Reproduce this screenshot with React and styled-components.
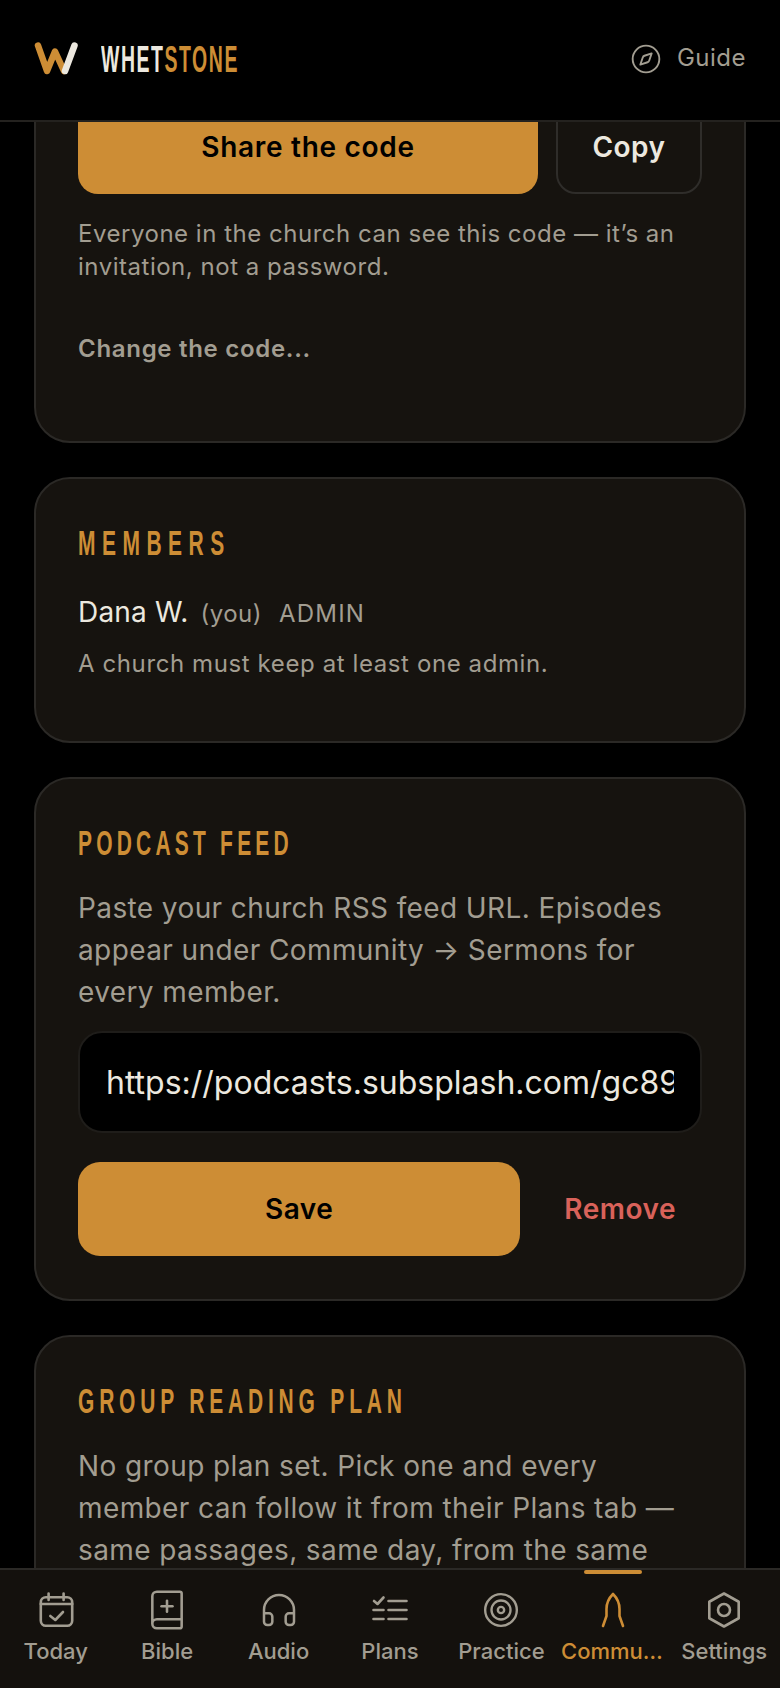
import styled, { createGlobalStyle } from "styled-components";
import { BookPlus, Compass, Headphones, Target } from "lucide-react";

const GlobalStyle = createGlobalStyle`
  html, body {
    margin: 0;
    background: #000;
  }
  * {
    box-sizing: border-box;
  }
`;

const accent = "#cd8d35";
const muted = "#a29d91";

const Logo = () => (
  <svg width="44" height="33" viewBox="0 0 44 33" fill="none" strokeWidth="6.5" strokeLinecap="round" strokeLinejoin="round">
    <path d="M4 3.5 L13 29 L21 9.5 L30 29" stroke={accent} />
    <path d="M40.5 3.5 L31 29" stroke="#ece8df" />
  </svg>
);

// the tab icons that the icon package has no close match for, all on a 44 box
const TabSvg = ({ children }) => (
  <svg width="44" height="44" viewBox="0 0 44 44" fill="none" stroke="currentColor" strokeWidth="2.6" strokeLinecap="round" strokeLinejoin="round">
    {children}
  </svg>
);

const CalendarIcon = () => (
  <TabSvg>
    <rect x="6.8" y="9.3" width="31.4" height="28.4" rx="5" />
    <path d="M6.8 16h31.4" />
    <path d="M14.6 5.5v6.5M29.6 5.5v6.5" />
    <path d="M16.3 28l5 4 7.7-8" />
  </TabSvg>
);

const ListIcon = () => (
  <TabSvg>
    <path d="M6 13l3.5 3 6-6.5" />
    <path d="M5.5 22h10M5.5 31h10" />
    <path d="M20.5 13h18M20.5 22h18M20.5 31h18" />
  </TabSvg>
);

const SpireIcon = () => (
  <TabSvg>
    <path d="M12 38 L15.5 28 V21 C15.5 14 19 9 22 6 C25 9 28.5 14 28.5 21 V28 L32 38" />
  </TabSvg>
);

const HexIcon = () => (
  <TabSvg>
    <path d="M22 5.5 L36.7 13.75 V30.25 L22 38.5 L7.3 30.25 V13.75 Z" />
    <circle cx="22" cy="22" r="6" />
  </TabSvg>
);

const tabs = [
  { label: "Today", icon: <CalendarIcon /> },
  { label: "Bible", icon: <BookPlus size={44} strokeWidth={1.4} /> },
  { label: "Audio", icon: <Headphones size={40} strokeWidth={1.5} /> },
  { label: "Plans", icon: <ListIcon /> },
  { label: "Practice", icon: <Target size={38} strokeWidth={1.5} /> },
  { label: "Community", icon: <SpireIcon />, active: true },
  { label: "Settings", icon: <HexIcon /> },
];

const App = () => (
  <Page>
    <GlobalStyle />
    <Header>
      <Brand>
        <Logo />
        <Wordmark>
          WHET<span>STONE</span>
        </Wordmark>
      </Brand>
      <GuideLink>
        <Compass size={32} strokeWidth={1.4} />
        Guide
      </GuideLink>
    </Header>
    <Main>
      <Scroller>
        <Card>
          <ButtonRow>
            <PrimaryButton>Share the code</PrimaryButton>
            <OutlineButton>Copy</OutlineButton>
          </ButtonRow>
          <Hint>Everyone in the church can see this code — it’s an invitation, not a password.</Hint>
          <TextLink>Change the code...</TextLink>
        </Card>
        <Card>
          <SectionTitle $tracking={10.8}>MEMBERS</SectionTitle>
          <MemberRow>
            <MemberName>Dana W.</MemberName>
            <MemberYou>(you)</MemberYou>
            <MemberRole>ADMIN</MemberRole>
          </MemberRow>
          <MemberNote>A church must keep at least one admin.</MemberNote>
        </Card>
        <Card>
          <SectionTitle>PODCAST FEED</SectionTitle>
          <Body>Paste your church RSS feed URL. Episodes appear under Community → Sermons for every member.</Body>
          <UrlInput readOnly value="https://podcasts.subsplash.com/gc89abc/podcast.rss" />
          <SaveRow>
            <SaveButton>Save</SaveButton>
            <RemoveButton>Remove</RemoveButton>
          </SaveRow>
        </Card>
        <Card>
          <SectionTitle $tracking={8}>GROUP READING PLAN</SectionTitle>
          <Body>No group plan set. Pick one and every member can follow it from their Plans tab — same passages, same day, from the same church.</Body>
        </Card>
      </Scroller>
    </Main>
    <TabBar>
      {tabs.map((tab) => (
        <Tab key={tab.label} $active={tab.active}>
          {tab.active && <TabMarker />}
          <TabIcon>{tab.icon}</TabIcon>
          <TabLabel>{tab.label}</TabLabel>
        </Tab>
      ))}
    </TabBar>
  </Page>
);

export default App;

const Page = styled.div`
  width: 780px;
  height: 1688px;
  display: flex;
  flex-direction: column;
  overflow: hidden;
  background: #000;
  font-family: Inter, "Liberation Sans", sans-serif;
`;

const Header = styled.header`
  position: relative;
  z-index: 1;
  flex: none;
  height: 122px;
  padding: 0 34px 4px;
  display: flex;
  align-items: center;
  justify-content: space-between;
  background: #000;
  border-bottom: 2px solid #24221f;
`;

const Brand = styled.div`
  display: flex;
  align-items: center;
  gap: 23px;
`;

// no condensed face is installed, so the display type is a squeezed bold
const Wordmark = styled.div`
  margin-top: 4px;
  font-family: "Liberation Sans", sans-serif;
  font-size: 36px;
  font-weight: 700;
  line-height: 40px;
  letter-spacing: 2.9px;
  color: #ece8df;
  transform: scaleX(0.54);
  transform-origin: left center;

  span {
    color: ${accent};
  }
`;

const GuideLink = styled.div`
  margin-top: -2px;
  display: flex;
  align-items: center;
  gap: 15px;
  font-size: 24px;
  letter-spacing: 0.5px;
  color: ${muted};

  svg {
    margin-top: 4px;
  }
`;

const Main = styled.main`
  flex: 1;
  min-height: 0;
  overflow: hidden;
`;

// the page is scrolled down, so the first card starts under the header
const Scroller = styled.div`
  margin-top: -68px;
  padding: 0 34px;
  display: flex;
  flex-direction: column;
  gap: 34px;
`;

const Card = styled.section`
  padding: 44px 42px 40px;
  background: #16130f;
  border: 2px solid #2b2926;
  border-radius: 36px;
`;

const ButtonRow = styled.div`
  display: flex;
  gap: 18px;
  margin-bottom: 23px;
`;

const PrimaryButton = styled.button`
  flex: 1;
  height: 94px;
  border: none;
  border-radius: 20px;
  background: ${accent};
  color: #000;
  font: 600 28px Inter, sans-serif;
  letter-spacing: 0.7px;
`;

const OutlineButton = styled.button`
  width: 146px;
  height: 94px;
  border: 2px solid #2f2d2a;
  border-radius: 20px;
  background: transparent;
  color: #ece8df;
  font: 600 28px Inter, sans-serif;
  letter-spacing: 0.5px;
`;

const Hint = styled.p`
  margin: 0;
  font-size: 24px;
  line-height: 33px;
  letter-spacing: 0.52px;
  color: ${muted};
`;

const TextLink = styled.div`
  margin-top: 49px;
  margin-bottom: 36px;
  font-size: 24px;
  font-weight: 600;
  line-height: 33px;
  letter-spacing: 0.7px;
  color: ${muted};
`;

const SectionTitle = styled.h2`
  width: fit-content;
  margin: 0 0 24px;
  font-family: "Liberation Sans", sans-serif;
  font-size: 35px;
  font-weight: 700;
  line-height: 40px;
  letter-spacing: ${(p) => p.$tracking || 7}px;
  white-space: nowrap;
  color: ${accent};
  transform: scaleX(0.6);
  transform-origin: left center;
`;

const MemberRow = styled.div`
  padding: 4px 0;
  display: flex;
  align-items: baseline;
  gap: 12px;
  line-height: 42px;
`;

const MemberName = styled.span`
  font-size: 28px;
  letter-spacing: 0.2px;
  color: #ece8df;
`;

const MemberYou = styled.span`
  font-size: 24px;
  letter-spacing: 0.5px;
  color: ${muted};
`;

const MemberRole = styled.span`
  margin-left: 5px;
  font-size: 24px;
  letter-spacing: 1.2px;
  color: ${muted};
`;

const MemberNote = styled.p`
  margin: 8px 0 21px;
  font-size: 24px;
  line-height: 33px;
  letter-spacing: 0.6px;
  color: ${muted};
`;

const Body = styled.p`
  margin: 0;
  font-size: 28px;
  line-height: 42px;
  letter-spacing: 0.4px;
  color: ${muted};
`;

const UrlInput = styled.input`
  display: block;
  width: 100%;
  height: 102px;
  margin-top: 18px;
  padding: 0 26px;
  background: #000;
  border: 2px solid #1f1d1a;
  border-radius: 24px;
  color: #ece8df;
  font: 400 32px Inter, sans-serif;
`;

const SaveRow = styled.div`
  display: flex;
  align-items: center;
  gap: 44px;
  margin: 29px 0 3px;
`;

const SaveButton = styled.button`
  flex: 1;
  height: 94px;
  border: none;
  border-radius: 22px;
  background: ${accent};
  color: #000;
  font: 600 28px Inter, sans-serif;
  letter-spacing: 0.5px;
`;

const RemoveButton = styled.button`
  padding: 0 26px 0 0;
  border: none;
  background: none;
  color: #d9625a;
  font: 600 28px Inter, sans-serif;
  letter-spacing: 0.5px;
`;

const TabBar = styled.nav`
  position: relative;
  z-index: 1;
  flex: none;
  height: 120px;
  display: flex;
  background: #14110d;
  border-top: 2px solid #2b2926;
`;

const Tab = styled.div`
  position: relative;
  flex: 1;
  min-width: 0;
  padding-top: 18px;
  display: flex;
  flex-direction: column;
  align-items: center;
  gap: 6px;
  color: ${(p) => (p.$active ? accent : muted)};
`;

const TabMarker = styled.div`
  position: absolute;
  top: 0;
  left: 50%;
  width: 58px;
  height: 4px;
  margin-left: -29px;
  border-radius: 2px;
  background: ${accent};
`;

const TabIcon = styled.div`
  height: 44px;
  display: flex;
  align-items: center;
  justify-content: center;
`;

const TabLabel = styled.span`
  max-width: 100%;
  padding: 0 4px;
  overflow: hidden;
  white-space: nowrap;
  text-overflow: ellipsis;
  font-size: 22px;
  font-weight: 500;
`;
